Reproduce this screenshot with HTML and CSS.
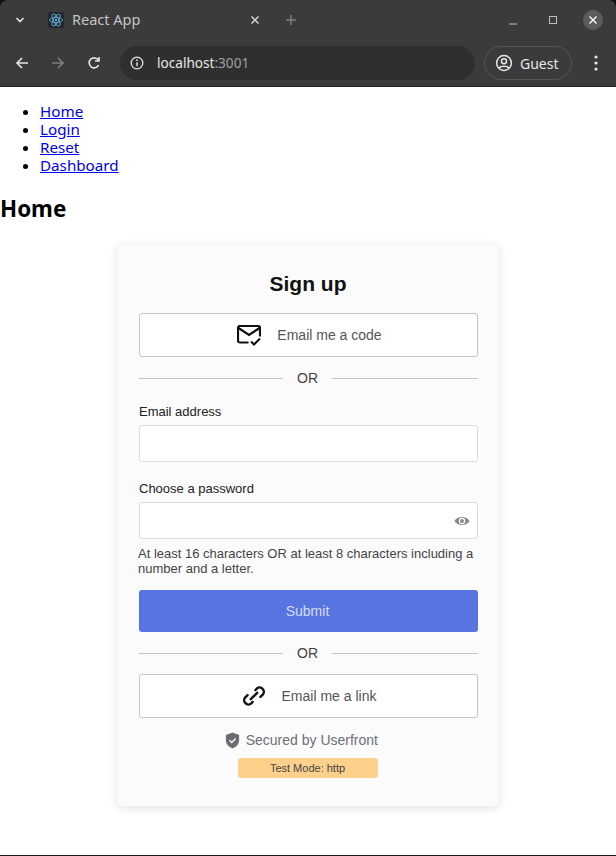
FILE: index.html
```html
<!DOCTYPE html>
<html>
<head>
    <title>React App</title>
    <link rel="stylesheet" href="styles.css">
</head>
<body>
<div class="browser">
    <div class="tabstrip">
        <svg class="tab-list" width="10" height="6" viewBox="0 0 10 6"><path d="M1.5 1 L5 4.5 L8.5 1" fill="none" stroke="#e3e3e3" stroke-width="1.6"/></svg>
        <svg class="favicon" width="16" height="16" viewBox="0 0 16 16">
            <rect width="16" height="16" rx="2" fill="#20272f"/>
            <g fill="none" stroke="#61a8c8" stroke-width="0.9">
                <ellipse cx="8" cy="8" rx="6.6" ry="2.6"/>
                <ellipse cx="8" cy="8" rx="6.6" ry="2.6" transform="rotate(60 8 8)"/>
                <ellipse cx="8" cy="8" rx="6.6" ry="2.6" transform="rotate(120 8 8)"/>
            </g>
            <circle cx="8" cy="8" r="1.3" fill="#61a8c8"/>
        </svg>
        <span class="tab-title">React App</span>
        <svg class="tab-close" width="10" height="10" viewBox="0 0 10 10"><path d="M1.5 1.5 L8.5 8.5 M8.5 1.5 L1.5 8.5" stroke="#d6d6d6" stroke-width="1.5"/></svg>
        <svg class="tab-new" width="12" height="12" viewBox="0 0 12 12"><path d="M6 1 V11 M1 6 H11" stroke="#7d7d7d" stroke-width="1.5"/></svg>
        <div class="window-btns">
            <svg width="10" height="10" viewBox="0 0 10 10"><path d="M1 9 H9" stroke="#bdbdbd" stroke-width="1"/></svg>
            <svg width="10" height="10" viewBox="0 0 10 10"><rect x="1.5" y="1.5" width="7" height="7" fill="none" stroke="#bdbdbd" stroke-width="1"/></svg>
            <span class="win-close"><svg width="10" height="10" viewBox="0 0 10 10"><path d="M1.5 1.5 L8.5 8.5 M8.5 1.5 L1.5 8.5" stroke="#fff" stroke-width="1.4"/></svg></span>
        </div>
    </div>
    <div class="toolbar">
        <svg width="14" height="14" viewBox="0 0 14 14"><path d="M13 7 H2 M7 2 L2 7 L7 12" fill="none" stroke="#e6e6e6" stroke-width="1.6"/></svg>
        <svg class="nav-forward" width="14" height="14" viewBox="0 0 14 14"><path d="M1 7 H12 M7 2 L12 7 L7 12" fill="none" stroke="#7f7f7f" stroke-width="1.6"/></svg>
        <svg class="nav-reload" width="14" height="14" viewBox="0 0 14 14"><path d="M11.6 9.2 A5 5 0 1 1 11.4 4.2 M12 1 V5 H8" fill="none" stroke="#e6e6e6" stroke-width="1.6"/></svg>
        <div class="omnibox">
            <svg width="14" height="14" viewBox="0 0 14 14"><circle cx="7" cy="7" r="5.8" fill="none" stroke="#e3e3e3" stroke-width="1.3"/><path d="M7 6.2 V10.2" stroke="#e3e3e3" stroke-width="1.4"/><circle cx="7" cy="4.2" r="0.9" fill="#e3e3e3"/></svg>
            <span class="url">localhost<span class="url-port">:3001</span></span>
        </div>
        <div class="profile">
            <svg width="18" height="18" viewBox="0 0 18 18"><circle cx="9" cy="9" r="7.4" fill="none" stroke="#e6e6e6" stroke-width="1.5"/><circle cx="9" cy="7.2" r="2.5" fill="none" stroke="#e6e6e6" stroke-width="1.5"/><path d="M4.2 14 C5.5 11.6 12.5 11.6 13.8 14" fill="none" stroke="#e6e6e6" stroke-width="1.5"/></svg>
            <span>Guest</span>
        </div>
        <svg class="menu-dots" width="4" height="16" viewBox="0 0 4 16"><circle cx="2" cy="2" r="1.6" fill="#e6e6e6"/><circle cx="2" cy="8" r="1.6" fill="#e6e6e6"/><circle cx="2" cy="14" r="1.6" fill="#e6e6e6"/></svg>
    </div>
</div>

<div class="page">
    <ul class="nav-list">
        <li><a href="#">Home</a></li>
        <li><a href="#">Login</a></li>
        <li><a href="#">Reset</a></li>
        <li><a href="#">Dashboard</a></li>
    </ul>
    <h1>Home</h1>

    <div class="card">
        <h2>Sign up</h2>
        <button class="outline-btn">
            <svg width="24" height="21" viewBox="0 0 24 21"><path d="M11.5 17.5 H3 a2 2 0 0 1 -2 -2 V3 A2 2 0 0 1 3 1 H21 a2 2 0 0 1 2 2 V11.5" fill="none" stroke="#111" stroke-width="2.2"/><path d="M1.5 3 L12 10 L22.5 3" fill="none" stroke="#111" stroke-width="2.2"/><path d="M14 16.5 L17 19.5 L23 13.5" fill="none" stroke="#111" stroke-width="2"/></svg>
            <span>Email me a code</span>
        </button>
        <div class="divider first"><span>OR</span></div>

        <label class="field-label">Email address</label>
        <div class="text-input"></div>

        <label class="field-label second">Choose a password</label>
        <div class="text-input">
            <svg class="eye" width="16" height="12" viewBox="0 0 16 12"><path d="M0.5 6 C3 0.6 13 0.6 15.5 6 C13 11.4 3 11.4 0.5 6 Z" fill="#8a8a8a"/><circle cx="8" cy="6" r="3.2" fill="#fcfcfd"/><circle cx="8" cy="6" r="2" fill="#8a8a8a"/></svg>
        </div>
        <p class="hint">At least 16 characters OR at least 8 characters including a number and a letter.</p>

        <button class="submit-btn">Submit</button>
        <div class="divider"><span>OR</span></div>
        <button class="outline-btn link-btn">
            <svg width="22" height="22" viewBox="0 0 24 24"><g fill="none" stroke="#111" stroke-width="2.6" stroke-linecap="round"><path d="M13.5 5.5 L15 4 a4.6 4.6 0 0 1 6.5 6.5 L19 13"/><path d="M10.5 18.5 L9 20 a4.6 4.6 0 0 1 -6.5 -6.5 L5 11"/><path d="M8.5 15.5 L15.5 8.5"/></g></svg>
            <span>Email me a link</span>
        </button>

        <div class="card-footer">
            <div class="secured">
                <svg width="15" height="17" viewBox="0 0 16 18"><path d="M8 0.5 L15 3 V8.5 C15 13 12 16 8 17.5 C4 16 1 13 1 8.5 V3 Z" fill="#6b6b70"/><path d="M4.8 8.8 L7.2 11.2 L11.4 6.8" fill="none" stroke="#fbfbfc" stroke-width="1.5"/></svg>
                <span>Secured by Userfront</span>
            </div>
            <div class="test-mode">Test Mode: http</div>
        </div>
    </div>
</div>
</body>
</html>
```

FILE: styles.css
```css
html, body {
    margin: 0;
    height: 100%;
}
body {
    background-color: #fff;
    font-family: "Noto Sans", sans-serif;
    height: 856px;
    box-sizing: border-box;
    border-bottom: 1px solid #1a1a1a;
    overflow: hidden;
}

/* browser chrome */
.browser {
    background-color: #111;
    height: 87px;
    border-bottom: 1px solid #222;
    box-sizing: border-box;
    color: #e6e6e6;
}
.tabstrip {
    display: flex;
    align-items: center;
    height: 40px;
    padding-left: 15px;
    background-color: #3b3b3b;
    border-radius: 8px 8px 0 0;
}
.favicon {
    margin-left: 23px;
}
.tab-title {
    margin-left: 8px;
    margin-bottom: 2px;
    font-size: 14.5px;
    color: #c4c4c4;
    width: 178px;
}
.tab-new {
    margin-left: 25px;
}
.window-btns {
    margin-left: auto;
    margin-right: 13px;
    display: flex;
    align-items: center;
    gap: 30px;
}
.win-close {
    width: 20px;
    height: 20px;
    border-radius: 50%;
    background-color: #5c5c5c;
    display: flex;
    align-items: center;
    justify-content: center;
    margin-left: -5px;
}
.toolbar {
    display: flex;
    align-items: center;
    height: 46px;
    padding: 0 18px 0 15px;
    background-color: #3b3b3b;
}
.nav-forward {
    margin-left: 22px;
}
.nav-reload {
    margin-left: 22px;
}
.omnibox {
    margin-left: 19px;
    width: 355px;
    height: 34px;
    border-radius: 17px;
    background-color: #2f2f2f;
    display: flex;
    align-items: center;
    padding-left: 10px;
    box-sizing: border-box;
}
.url {
    margin-left: 13px;
    margin-bottom: 2px;
    font-size: 13.6px;
    color: #e8e8e8;
}
.url-port {
    color: #a0a0a0;
}
.profile {
    margin-left: 9px;
    width: 88px;
    height: 34px;
    box-sizing: border-box;
    border: 1px solid #555;
    border-radius: 17px;
    display: flex;
    align-items: center;
    gap: 7px;
    padding-left: 10px;
    font-size: 14px;
}
.menu-dots {
    margin-left: auto;
}

/* page */
.page {
    color: #000;
}
.nav-list {
    margin: 15px 0 16px;
    padding-left: 40px;
    font-size: 15.2px;
    line-height: 18px;
}
.nav-list a {
    display: inline-block;
    color: #0000ee;
}
h1 {
    margin: 21px 0 0;
    font-size: 22.4px;
    line-height: 27px;
}

/* sign up card */
.card {
    width: 382px;
    height: 562px;
    box-sizing: border-box;
    margin: 22px auto 0;
    padding: 27px 21px 0 22px;
    background-color: #fbfbfc;
    border-radius: 4px;
    box-shadow: 0 2px 8px rgba(0, 0, 0, 0.12);
    font-family: "Liberation Sans", Arial, sans-serif;
}
.card h2 {
    margin: 0 0 16px;
    padding-right: 1px;
    font-size: 21px;
    line-height: 26px;
    text-align: center;
    color: #111;
}
.outline-btn {
    width: 100%;
    height: 44px;
    background-color: #fff;
    border: 1px solid #c4c4c8;
    border-radius: 3px;
    display: flex;
    align-items: center;
    justify-content: center;
    gap: 16px;
    font-family: inherit;
    font-size: 14px;
    color: #555;
    padding: 0 0 0 2px;
}
.link-btn {
    gap: 17px;
}
.divider {
    display: flex;
    align-items: center;
    gap: 14px;
    height: 44px;
    font-size: 14px;
    color: #444;
    margin: -1px 0 0;
}
.divider::before, .divider::after {
    content: "";
    flex: 1;
    height: 1px;
    background-color: #c4c4c8;
}
.divider::before {
    flex: 0 0 144px;
}
.divider span {
    width: 21px;
    text-align: center;
}
.divider.first {
    margin-bottom: 2px;
}
.field-label {
    display: block;
    font-size: 13px;
    line-height: 16px;
    color: #222;
    margin-top: 4px;
    margin-bottom: 5px;
}
.field-label.second {
    margin-top: 19px;
}
.text-input {
    height: 37px;
    box-sizing: border-box;
    background-color: #fff;
    border: 1px solid #dcdce0;
    border-radius: 3px;
    display: flex;
    align-items: center;
    justify-content: flex-end;
    padding-right: 7px;
}
.hint {
    margin: 7px 0 0 -1px;
    font-size: 13px;
    line-height: 15px;
    color: #444;
}
.submit-btn {
    display: block;
    width: 100%;
    height: 42px;
    margin-top: 14px;
    padding: 0 2px 0 0;
    background-color: #5874e0;
    border: none;
    border-radius: 3px;
    color: #d5dcf8;
    font-family: inherit;
    font-size: 14px;
}
.submit-btn + .divider {
    margin-bottom: -1px;
}
.card-footer {
    width: 153px;
    margin: 13px 0 0 86px;
    display: flex;
    flex-direction: column;
    align-items: flex-end;
    gap: 9px;
}
.secured {
    display: flex;
    align-items: center;
    gap: 6px;
    font-size: 14px;
    color: #6f6f74;
    height: 18px;
    white-space: nowrap;
}
.test-mode {
    width: 140px;
    height: 20px;
    padding-right: 1px;
    box-sizing: border-box;
    background-color: #fdd08c;
    border-radius: 3px;
    font-size: 11px;
    line-height: 20px;
    text-align: center;
    color: #444;
}
```
